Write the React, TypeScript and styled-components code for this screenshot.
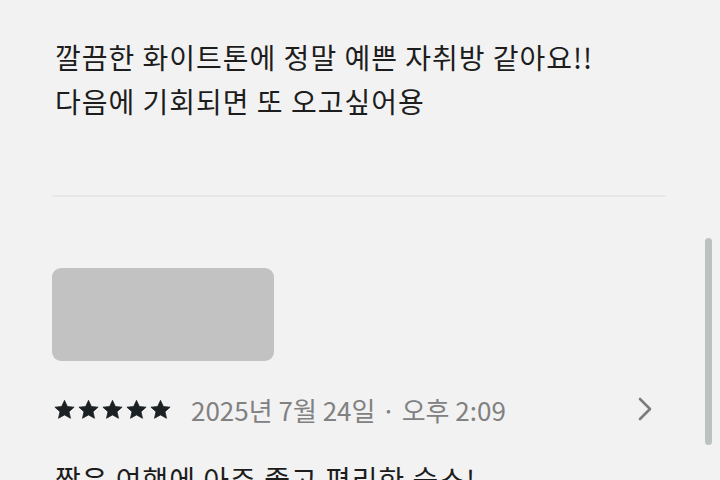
import React from "react"
import styled, { createGlobalStyle } from "styled-components"

//----------------------------------------------------------
//-- Review list
//----------------------------------------------------------
const GlobalStyle = createGlobalStyle`
  html, body {
    margin: 0;
    padding: 0;
    background: #f2f2f2;
    overflow: hidden;
  }
`

const Screen = styled.div`
  position: relative;
  width: 720px;
  height: 480px;
  overflow: hidden;
  background: #f2f2f2;
  font-family: "Noto Sans CJK KR", "Noto Sans", sans-serif;
`

const List = styled.div`
  padding: 35px 54px 0 52px;
`

const ReviewText = styled.p`
  margin: 0 0 0 3px;
  font-size: 28px;
  line-height: 44px;
  color: #1d1d1d;
  letter-spacing: 1px;
  white-space: nowrap;
`

const Divider = styled.div`
  height: 2px;
  margin-top: 72px;
  background: #e6e6e6;
  border-radius: 1px;
`

const Review = styled.div`
  padding-top: 71px;
`

const Photo = styled.div`
  width: 222px;
  height: 93px;
  border-radius: 9px;
  background: #c2c2c2;
`

const MetaRow = styled.div`
  display: flex;
  align-items: center;
  margin-top: 33px;
  height: 30px;
`

const Stars = styled.div`
  display: flex;
  gap: 3px;
  margin-left: 2px;
`

const DateText = styled.span`
  margin-left: 20px;
  font-size: 26px;
  color: #818181;
  letter-spacing: 0;
`

const Chevron = styled.svg`
  margin-left: auto;
  margin-right: 12px;
`

const NextText = styled(ReviewText)`
  margin-top: 33px;
`

const ScrollThumb = styled.div`
  position: absolute;
  left: 705px;
  top: 238px;
  width: 7px;
  height: 207px;
  border-radius: 4px;
  background: #bcc1c1;
`

const Star = () => (
  <svg width="21" height="21" viewBox="0 0 24 24">
    <path
      d="M12 1.5l3.3 7 7.7.8-5.8 5.2 1.7 7.6L12 18.2l-6.9 3.9 1.7-7.6L1 9.3l7.7-.8z"
      fill="#1b2023"
      stroke="#1b2023"
      strokeWidth="0.8"
      strokeLinejoin="round"
    />
  </svg>
)

export default function App()
{
  return (
    <Screen>
      <GlobalStyle />
      <List>
        <ReviewText>
          깔끔한 화이트톤에 정말 예쁜 자취방 같아요!!
          <br />
          다음에 기회되면 또 오고싶어용
        </ReviewText>
        <Divider />
        <Review>
          <Photo />
          <MetaRow>
            <Stars>
              {[0, 1, 2, 3, 4].map((i) => <Star key={i} />)}
            </Stars>
            <DateText>2025년 7월 24일 · 오후 2:09</DateText>
            <Chevron width="18" height="26" viewBox="0 0 18 26">
              <path
                d="M4 3l10 10-10 10"
                fill="none"
                stroke="#7b7b7b"
                strokeWidth="2.6"
                strokeLinecap="round"
                strokeLinejoin="round"
              />
            </Chevron>
          </MetaRow>
          <NextText>짧은 여행에 아주 좋고 편리한 숙소!</NextText>
        </Review>
      </List>
      <ScrollThumb />
    </Screen>
  )
}
